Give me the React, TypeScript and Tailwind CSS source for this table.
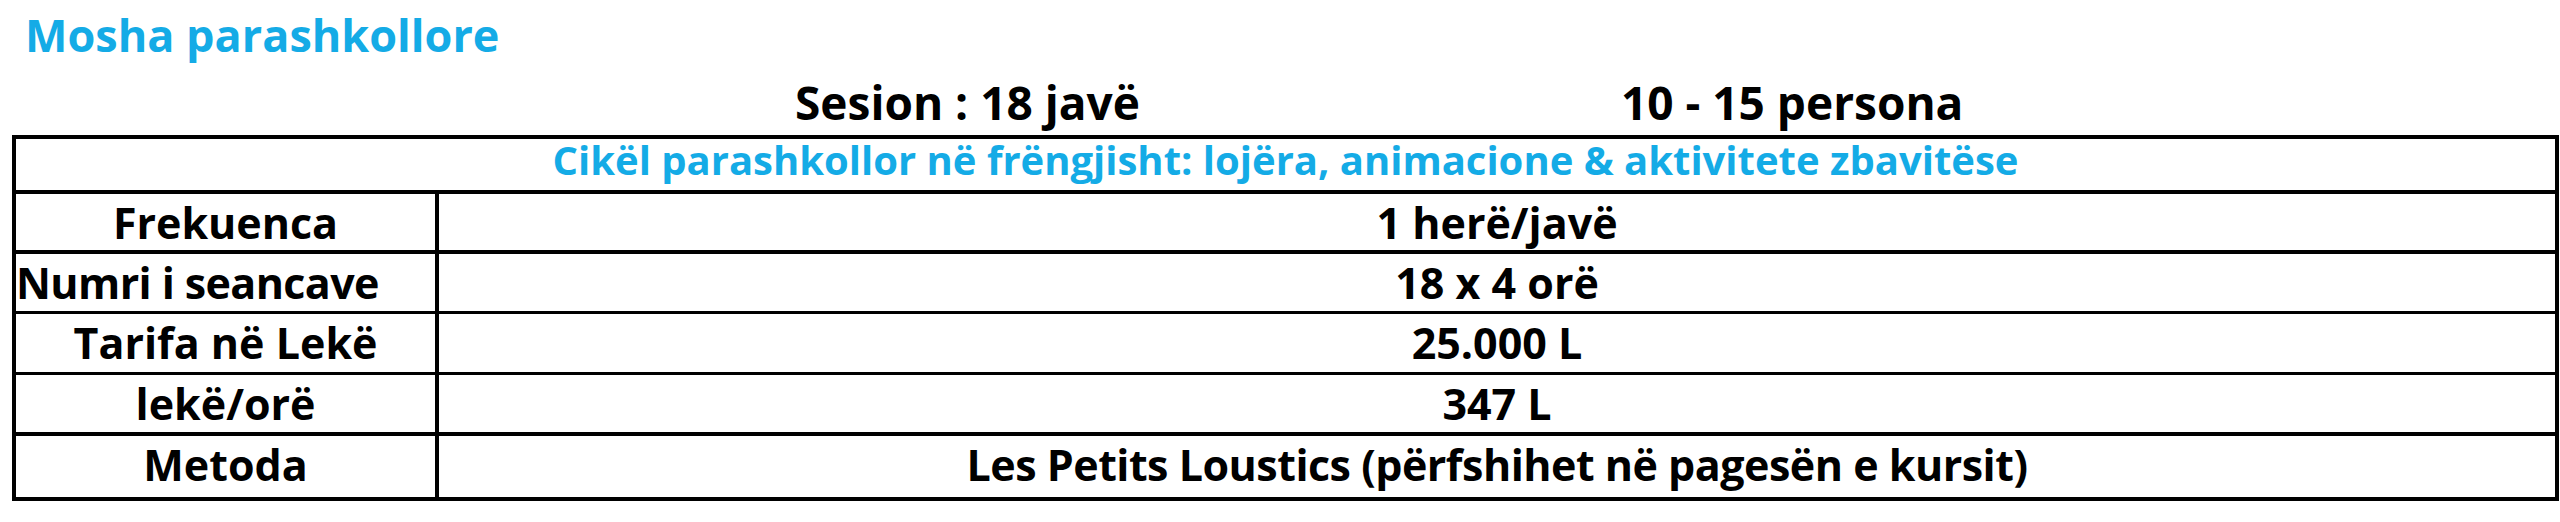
const rows: { label: string; value: string; h: string; border: string; labelCls?: string; valueCls?: string }[] = [
  { label: 'Frekuenca', value: '1 herë/javë', h: 'h-[60px]', border: 'border-b-4' },
  {
    label: 'Numri i seancave',
    value: '18 x 4 orë',
    h: 'h-[60px]',
    border: 'border-b-[3px]',
    labelCls: 'justify-start tracking-[-0.6px]',
  },
  { label: 'Tarifa në Lekë', value: '25.000 L', h: 'h-[61px]', border: 'border-b-[3px]' },
  { label: 'lekë/orë', value: '347 L', h: 'h-[61px]', border: 'border-b-4' },
  {
    label: 'Metoda',
    value: 'Les Petits Loustics (përfshihet në pagesën e kursit)',
    h: 'h-[61px]',
    border: '',
    valueCls: 'tracking-[-0.5px]',
  },
];

export default function App() {
  return (
    <div className="w-[2560px] h-[522px] bg-white overflow-hidden font-['Open_Sans',sans-serif] font-bold text-black">
      {/* title */}
      <div className="pt-[12px] pl-[25px] text-[45px] leading-none text-[#14abe6]">
        Mosha parashkollore
      </div>

      {/* session / group size */}
      <div className="mt-[22px] flex text-[46px] leading-none">
        <span className="ml-[795px] w-[826px]">Sesion : 18 javë</span>
        <span>10 - 15 persona</span>
      </div>

      {/* table */}
      <div className="mt-[10px] ml-[12px] w-[2547px] border-4 border-black">
        <div className="h-[55px] border-b-4 border-black flex justify-center text-[40px] leading-[41px] text-[#14abe6]">
          Cikël parashkollor në frëngjisht: lojëra, animacione &amp; aktivitete zbavitëse
        </div>
        {rows.map((r) => (
          <div key={r.label} className={`flex ${r.h} ${r.border} border-black text-[43px] leading-[57px]`}>
            <div
              className={`w-[423px] shrink-0 border-r-4 border-black flex whitespace-nowrap ${
                r.labelCls ?? 'justify-center'
              }`}
            >
              {r.label}
            </div>
            <div className={`flex-1 flex justify-center whitespace-nowrap ${r.valueCls ?? ''}`}>{r.value}</div>
          </div>
        ))}
      </div>
    </div>
  );
}
